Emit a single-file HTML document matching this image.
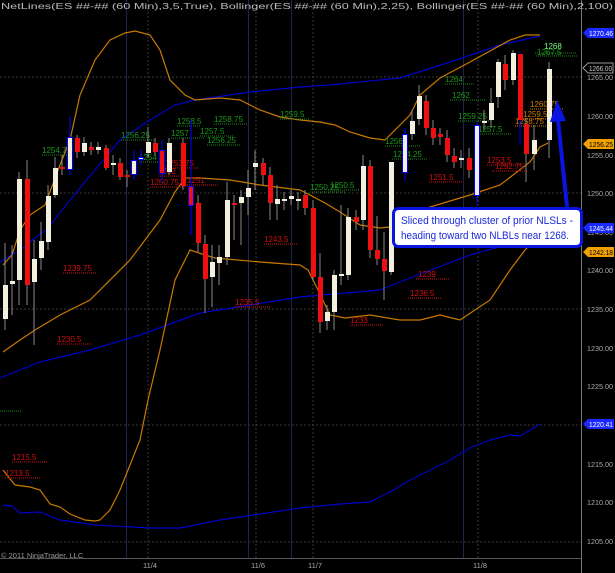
<!DOCTYPE html>
<html><head><meta charset="utf-8"><style>
html,body{margin:0;padding:0;background:#000;width:615px;height:573px;overflow:hidden}
svg{display:block}
text{font-family:"Liberation Sans",sans-serif}
</style></head><body>
<svg width="615" height="573" viewBox="0 0 615 573" xmlns="http://www.w3.org/2000/svg">
<rect width="615" height="573" fill="#000"/>
<g stroke="#3a3a3a" stroke-width="1" stroke-dasharray="2,2">
<line x1="0" y1="77" x2="581" y2="77"/><line x1="0" y1="193" x2="581" y2="193"/>
<line x1="0" y1="309" x2="581" y2="309"/><line x1="0" y1="425" x2="581" y2="425"/>
<line x1="0" y1="542" x2="581" y2="542"/>
<line x1="148" y1="0" x2="148" y2="558"/><line x1="256" y1="0" x2="256" y2="558"/>
<line x1="313" y1="0" x2="313" y2="558"/><line x1="478" y1="0" x2="478" y2="558"/>
</g>
<g stroke="#22224a" stroke-width="1">
<line x1="126.5" y1="0" x2="126.5" y2="558"/><line x1="248.5" y1="0" x2="248.5" y2="558"/>
<line x1="291.5" y1="0" x2="291.5" y2="558"/><line x1="463.5" y1="0" x2="463.5" y2="558"/>
</g>
<line x1="581.5" y1="0" x2="581.5" y2="573" stroke="#777"/>
<line x1="0" y1="558.5" x2="581" y2="558.5" stroke="#555"/>
<g fill="none" stroke-width="1.2">
<polyline stroke="#0000c8" points="0,262 20,250 48,228 70,200 95,170 120,140 150,120 175,105 195,100 250,92 300,87 330,85 400,78 450,62 500,45 540,36"/>
<polyline stroke="#0000c8" points="0,378 40,362 90,350 140,335 200,313 250,305 300,297 380,290 410,278 470,255 545,234"/>
<polyline stroke="#0000c8" points="3,505 12,506 20,513 40,512 60,520 95,525 150,528 180,528 220,520 260,514 300,508 340,504 370,502 390,492 410,480 430,470 450,460 470,448 490,440 510,435 520,436 540,424"/>
<polyline stroke="#c87a00" points="3,265 12,255 20,230 30,215 45,205 60,165 70,140 80,95 95,60 110,40 125,33 135,31 150,35 160,50 170,80 185,95 195,100 220,98 240,100 260,110 280,117 300,120 320,122 335,125 350,132 370,138 385,140 400,125 410,115 420,95 440,78 470,62 510,40 525,35 540,35"/>
<polyline stroke="#c87a00" points="3,352 20,340 35,330 60,315 90,300 130,260 160,220 175,192 185,178 200,178 230,180 260,185 300,190 310,195 325,203 340,212 360,225 380,228 400,226 420,210 470,195 500,185 530,162 540,147 548,143"/>
<polyline stroke="#c87a00" points="3,470 15,485 30,487 40,490 50,504 60,507 70,514 85,520 95,521 100,520 110,510 120,490 130,465 140,440 148,400 160,350 175,280 190,250 205,255 215,258 260,262 300,265 308,270 318,290 330,315 345,318 370,315 400,320 420,320 440,315 460,320 490,300 510,270 525,250 540,235 545,233"/>
</g>
<g stroke-width="1" stroke-dasharray="1,1" fill="none">
<g stroke="#1a8a1a">
<line x1="42" y1="155" x2="67" y2="155"/><line x1="177" y1="126" x2="200" y2="126"/><line x1="214" y1="124" x2="247" y2="124"/>
<line x1="200" y1="136" x2="233" y2="136"/><line x1="207" y1="145" x2="240" y2="145"/><line x1="171" y1="138" x2="204" y2="138"/>
<line x1="121" y1="140" x2="155" y2="140"/><line x1="139" y1="162" x2="161" y2="162"/><line x1="280" y1="119" x2="310" y2="119"/>
<line x1="310" y1="192" x2="345" y2="192"/><line x1="328" y1="190" x2="360" y2="190"/><line x1="445" y1="84" x2="475" y2="84"/>
<line x1="450" y1="100" x2="485" y2="100"/><line x1="458" y1="121" x2="492" y2="121"/><line x1="478" y1="134" x2="512" y2="134"/>
<line x1="385" y1="146" x2="420" y2="146"/><line x1="392" y1="159" x2="427" y2="159"/><line x1="0" y1="411" x2="22" y2="411"/>
<line x1="535" y1="53" x2="577" y2="53"/><line x1="536" y1="56" x2="577" y2="56"/>
</g>
<g stroke="#d01010">
<line x1="165" y1="168" x2="198" y2="168"/><line x1="158" y1="176" x2="180" y2="176"/><line x1="150" y1="187" x2="185" y2="187"/>
<line x1="185" y1="185" x2="218" y2="185"/><line x1="63" y1="273" x2="97" y2="273"/><line x1="57" y1="344" x2="92" y2="344"/>
<line x1="264" y1="244" x2="298" y2="244"/><line x1="235" y1="307" x2="270" y2="307"/><line x1="350" y1="325" x2="383" y2="325"/>
<line x1="487" y1="165" x2="520" y2="165"/><line x1="492" y1="171" x2="527" y2="171"/><line x1="429" y1="182" x2="462" y2="182"/>
<line x1="416" y1="279" x2="450" y2="279"/><line x1="408" y1="298" x2="442" y2="298"/>
<line x1="12" y1="462" x2="47" y2="462"/><line x1="5" y1="478" x2="40" y2="478"/>
</g>
<g stroke="#d07a00">
<line x1="530" y1="109" x2="563" y2="109"/><line x1="523" y1="119" x2="556" y2="119"/><line x1="515" y1="126" x2="548" y2="126"/>
</g>
</g>
<g font-size="8">
<g fill="#1a9a1a">
<text x="42" y="153">1254.75</text><text x="177" y="124">1258.5</text><text x="214" y="122">1258.75</text>
<text x="200" y="134">1257.5</text><text x="207" y="143">1256.25</text><text x="171" y="136">1257</text>
<text x="121" y="138">1256.25</text><text x="139" y="160">1254</text><text x="280" y="117">1259.5</text>
<text x="310" y="190">1250.25</text><text x="330" y="188">1250.5</text><text x="445" y="82">1264</text>
<text x="452" y="98">1262</text><text x="458" y="119">1259.25</text><text x="478" y="132">1257.5</text>
<text x="385" y="144">1256</text><text x="393" y="157">1254.25</text><text x="537" y="55">1267.5</text>
</g>
<text x="544" y="49" fill="#7fff7f">1268</text>
<g fill="#d01010">
<text x="165" y="166">1253.75</text><text x="158" y="174">1252</text><text x="150" y="185">1250.75</text>
<text x="187" y="183">1251</text><text x="63" y="271">1239.75</text><text x="57" y="342">1230.5</text>
<text x="264" y="242">1243.5</text><text x="235" y="305">1235.5</text><text x="350" y="323">1233</text>
<text x="487" y="163">1253.5</text><text x="495" y="169">1252.75</text><text x="429" y="180">1251.5</text>
<text x="418" y="277">1239</text><text x="410" y="296">1236.5</text>
<text x="12" y="460">1215.5</text><text x="5" y="476">1213.5</text>
</g>
<g fill="#d07a00">
<text x="530" y="107">1260.75</text><text x="523" y="117">1259.5</text><text x="515" y="124">1258.75</text>
</g>
</g>
<g stroke="#888" stroke-width="1">
<line x1="5" y1="243" x2="5" y2="330"/><line x1="12" y1="245" x2="12" y2="315"/><line x1="19" y1="172" x2="19" y2="305"/>
<line x1="27" y1="160" x2="27" y2="305"/><line x1="34" y1="240" x2="34" y2="345"/><line x1="41" y1="222" x2="41" y2="270"/>
<line x1="48" y1="185" x2="48" y2="250"/><line x1="55" y1="157" x2="55" y2="198"/><line x1="62" y1="155" x2="62" y2="175"/>
<line x1="77" y1="135" x2="77" y2="158"/><line x1="84" y1="137" x2="84" y2="156"/><line x1="91" y1="142" x2="91" y2="155"/>
<line x1="98" y1="142" x2="98" y2="154"/><line x1="106" y1="145" x2="106" y2="170"/><line x1="113" y1="155" x2="113" y2="175"/>
<line x1="120" y1="158" x2="120" y2="180"/><line x1="127" y1="170" x2="127" y2="187"/><line x1="148" y1="127" x2="148" y2="158"/>
<line x1="155" y1="138" x2="155" y2="155"/><line x1="169" y1="138" x2="169" y2="175"/><line x1="183" y1="138" x2="183" y2="190"/>
<line x1="198" y1="195" x2="198" y2="252"/><line x1="205" y1="235" x2="205" y2="313"/><line x1="212" y1="245" x2="212" y2="307"/>
<line x1="219" y1="245" x2="219" y2="285"/><line x1="227" y1="182" x2="227" y2="265"/><line x1="234" y1="195" x2="234" y2="240"/>
<line x1="241" y1="190" x2="241" y2="245"/><line x1="248" y1="170" x2="248" y2="215"/><line x1="255" y1="150" x2="255" y2="190"/>
<line x1="263" y1="158" x2="263" y2="185"/><line x1="270" y1="167" x2="270" y2="220"/><line x1="277" y1="185" x2="277" y2="220"/>
<line x1="284" y1="192" x2="284" y2="210"/><line x1="291" y1="190" x2="291" y2="205"/><line x1="298" y1="192" x2="298" y2="210"/>
<line x1="305" y1="190" x2="305" y2="215"/><line x1="313" y1="200" x2="313" y2="280"/><line x1="320" y1="253" x2="320" y2="333"/>
<line x1="327" y1="305" x2="327" y2="330"/><line x1="334" y1="270" x2="334" y2="330"/><line x1="341" y1="205" x2="341" y2="285"/>
<line x1="348" y1="208" x2="348" y2="280"/><line x1="356" y1="210" x2="356" y2="230"/><line x1="363" y1="155" x2="363" y2="230"/>
<line x1="370" y1="160" x2="370" y2="258"/><line x1="377" y1="216" x2="377" y2="265"/><line x1="384" y1="232" x2="384" y2="300"/>
<line x1="391" y1="205" x2="391" y2="275"/><line x1="412" y1="110" x2="412" y2="140"/><line x1="419" y1="85" x2="419" y2="125"/>
<line x1="426" y1="95" x2="426" y2="135"/><line x1="433" y1="120" x2="433" y2="145"/><line x1="440" y1="128" x2="440" y2="145"/>
<line x1="447" y1="130" x2="447" y2="162"/><line x1="454" y1="148" x2="454" y2="168"/><line x1="461" y1="150" x2="461" y2="168"/>
<line x1="469" y1="148" x2="469" y2="178"/><line x1="484" y1="110" x2="484" y2="130"/><line x1="491" y1="88" x2="491" y2="128"/>
<line x1="498" y1="59" x2="498" y2="108"/><line x1="505" y1="55" x2="505" y2="90"/><line x1="513" y1="50" x2="513" y2="85"/>
<line x1="526" y1="118" x2="526" y2="182"/><line x1="534" y1="125" x2="534" y2="170"/><line x1="549" y1="62" x2="549" y2="158"/>
</g>
<g stroke="#0000ff" stroke-width="1">
<line x1="70" y1="116" x2="70" y2="175"/><line x1="134" y1="150" x2="134" y2="180"/><line x1="141" y1="150" x2="141" y2="165"/>
<line x1="162" y1="140" x2="162" y2="182"/><line x1="191" y1="120" x2="191" y2="235"/><line x1="405" y1="128" x2="405" y2="181"/>
<line x1="477" y1="122" x2="477" y2="205"/><line x1="520" y1="52" x2="520" y2="145"/>
</g>
<g fill="#f4f0e0">
<rect x="3" y="285" width="5" height="34"/><rect x="10" y="281" width="5" height="3"/><rect x="17" y="179" width="5" height="101"/>
<rect x="32" y="259" width="5" height="23"/><rect x="39" y="241" width="5" height="17"/><rect x="46" y="196" width="5" height="46"/>
<rect x="53" y="168" width="5" height="27"/><rect x="82" y="143" width="5" height="9"/><rect x="96" y="147" width="5" height="3"/>
<rect x="111" y="163" width="5" height="2"/><rect x="146" y="142" width="5" height="11"/><rect x="167" y="143" width="5" height="29"/>
<rect x="210" y="262" width="5" height="15"/><rect x="217" y="257" width="5" height="6"/><rect x="225" y="200" width="5" height="57"/>
<rect x="239" y="197" width="5" height="6"/><rect x="246" y="188" width="5" height="9"/><rect x="253" y="163" width="5" height="4"/>
<rect x="275" y="199" width="5" height="5"/><rect x="282" y="199" width="5" height="2"/><rect x="289" y="196" width="5" height="3"/>
<rect x="296" y="199" width="5" height="2"/><rect x="325" y="312" width="5" height="9"/><rect x="332" y="275" width="5" height="37"/>
<rect x="339" y="274" width="5" height="2"/><rect x="346" y="217" width="5" height="58"/><rect x="361" y="166" width="5" height="54"/>
<rect x="389" y="162" width="5" height="110"/><rect x="410" y="121" width="5" height="13"/><rect x="417" y="96" width="5" height="23"/>
<rect x="459" y="158" width="5" height="2"/><rect x="482" y="121" width="5" height="2"/><rect x="489" y="103" width="5" height="17"/>
<rect x="496" y="62" width="5" height="35"/><rect x="511" y="53" width="5" height="27"/><rect x="532" y="140" width="5" height="14"/>
<rect x="547" y="69" width="5" height="71"/>
</g>
<g fill="#f4f0e0" stroke="#0000ff" stroke-width="1">
<rect x="67.5" y="137.5" width="5" height="32"/><rect x="131.5" y="160.5" width="5" height="14"/><rect x="138.5" y="157.5" width="5" height="2"/>
<rect x="402.5" y="134.5" width="5" height="38"/><rect x="474.5" y="125.5" width="5" height="70"/>
</g>
<g fill="#ee1010">
<rect x="25" y="179" width="5" height="106"/><rect x="60" y="167" width="5" height="2"/><rect x="75" y="138" width="5" height="14"/>
<rect x="89" y="147" width="5" height="3"/><rect x="104" y="148" width="5" height="20"/><rect x="118" y="163" width="5" height="14"/>
<rect x="125" y="175" width="5" height="2"/><rect x="153" y="143" width="5" height="9"/><rect x="181" y="143" width="5" height="43"/>
<rect x="196" y="203" width="5" height="40"/><rect x="203" y="244" width="5" height="35"/><rect x="232" y="203" width="5" height="2"/>
<rect x="261" y="163" width="5" height="12"/><rect x="268" y="175" width="5" height="28"/><rect x="303" y="195" width="5" height="13"/>
<rect x="311" y="208" width="5" height="69"/><rect x="318" y="277" width="5" height="45"/><rect x="354" y="217" width="5" height="5"/>
<rect x="368" y="166" width="5" height="84"/><rect x="375" y="250" width="5" height="9"/><rect x="382" y="259" width="5" height="12"/>
<rect x="424" y="101" width="5" height="27"/><rect x="431" y="128" width="5" height="10"/><rect x="438" y="134" width="5" height="3"/>
<rect x="445" y="138" width="5" height="17"/><rect x="452" y="156" width="5" height="6"/><rect x="467" y="158" width="5" height="12"/>
<rect x="503" y="64" width="5" height="16"/><rect x="518" y="54" width="5" height="66"/><rect x="524" y="124" width="5" height="30"/>
</g>
<g fill="#ee1010" stroke="#0000ff"><rect x="159.5" y="150.5" width="5" height="23"/><rect x="188.5" y="186.5" width="5" height="19"/></g>
<line x1="567" y1="207" x2="558" y2="120" stroke="#0a14e0" stroke-width="4"/>
<polygon points="557,100 550,122 566,121" fill="#0a14e0"/>
<rect x="393.5" y="208.5" width="188" height="38" rx="5" fill="#fff" stroke="#0a14e0" stroke-width="3"/>
<text x="401" y="224" font-size="11" fill="#1a2ad8" textLength="172" lengthAdjust="spacingAndGlyphs">Sliced through cluster of prior NLSLs -</text>
<text x="401" y="239" font-size="11" fill="#1a2ad8" textLength="168" lengthAdjust="spacingAndGlyphs">heading toward two NLBLs near 1268.</text>
<g font-size="7.5" fill="#aaa">
<text x="587" y="80" textLength="26" lengthAdjust="spacingAndGlyphs">1265.00</text><text x="587" y="119" textLength="26" lengthAdjust="spacingAndGlyphs">1260.00</text><text x="587" y="158" textLength="26" lengthAdjust="spacingAndGlyphs">1255.00</text>
<text x="587" y="196" textLength="26" lengthAdjust="spacingAndGlyphs">1250.00</text><text x="587" y="235" textLength="26" lengthAdjust="spacingAndGlyphs">1245.00</text><text x="587" y="273" textLength="26" lengthAdjust="spacingAndGlyphs">1240.00</text>
<text x="587" y="312" textLength="26" lengthAdjust="spacingAndGlyphs">1235.00</text><text x="587" y="351" textLength="26" lengthAdjust="spacingAndGlyphs">1230.00</text><text x="587" y="389" textLength="26" lengthAdjust="spacingAndGlyphs">1225.00</text>
<text x="587" y="428" textLength="26" lengthAdjust="spacingAndGlyphs">1220.00</text><text x="587" y="467" textLength="26" lengthAdjust="spacingAndGlyphs">1215.00</text><text x="587" y="505" textLength="26" lengthAdjust="spacingAndGlyphs">1210.00</text>
<text x="587" y="544" textLength="26" lengthAdjust="spacingAndGlyphs">1205.00</text>
<text x="143" y="568">11/4</text><text x="251" y="568">11/6</text><text x="308" y="568">11/7</text><text x="473" y="568">11/8</text>
</g>
<g font-size="7.5">
<polygon points="583,33 588,28 614,28 614,38 588,38" fill="#1a2aff"/><text x="589" y="36" fill="#fff" textLength="24" lengthAdjust="spacingAndGlyphs">1270.46</text>
<polygon points="583,68 588,63 613,63 613,73 588,73" fill="#000" stroke="#999"/><text x="589" y="71" fill="#ccc" textLength="23" lengthAdjust="spacingAndGlyphs">1266.00</text>
<polygon points="583,144 588,139 614,139 614,149 588,149" fill="#f0a000"/><text x="589" y="147" fill="#000" textLength="24" lengthAdjust="spacingAndGlyphs">1256.25</text>
<polygon points="583,228 588,223 614,223 614,233 588,233" fill="#1a2aff"/><text x="589" y="231" fill="#fff" textLength="24" lengthAdjust="spacingAndGlyphs">1245.44</text>
<polygon points="583,252 588,247 614,247 614,257 588,257" fill="#f0a000"/><text x="589" y="255" fill="#000" textLength="24" lengthAdjust="spacingAndGlyphs">1242.18</text>
<polygon points="583,424 588,419 614,419 614,429 588,429" fill="#1a2aff"/><text x="589" y="427" fill="#fff" textLength="24" lengthAdjust="spacingAndGlyphs">1220.41</text>
</g>
<text x="1" y="9" font-size="8" fill="#bbb" textLength="612" lengthAdjust="spacingAndGlyphs">NetLines(ES ##-## (60 Min),3,5,True), Bollinger(ES ##-## (60 Min),2,25), Bollinger(ES ##-## (60 Min),2,100)</text>
<text x="1" y="558" font-size="7.5" fill="#999">© 2011 NinjaTrader, LLC</text>
</svg>
</body></html>
